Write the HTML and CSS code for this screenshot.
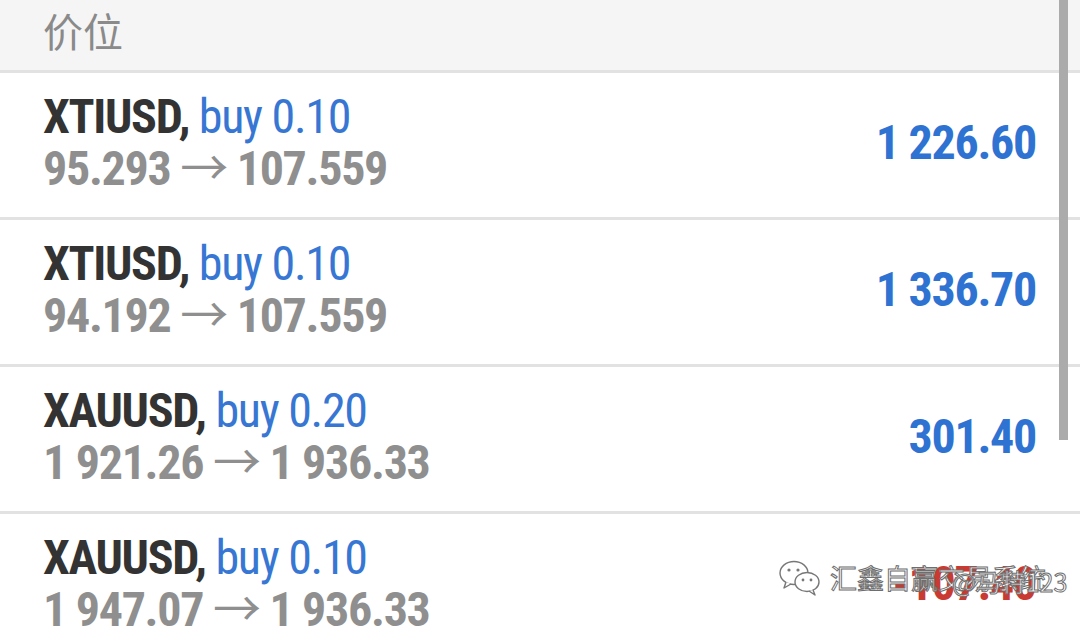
FILE: index.html
```html
<!DOCTYPE html>
<html lang="zh">
<head>
  <meta charset="UTF-8">
  <meta name="viewport" content="width=device-width, initial-scale=1.0">
  <title>持仓</title>
  <link rel="stylesheet" href="styles.css">
</head>
<body>
  <div class="screen">
    <div class="header">价位</div>

    <div class="trade">
      <div class="info">
        <div class="title"><span class="symbol">XTIUSD,</span> <span class="side">buy 0.10</span></div>
        <div class="prices">95.293 <span class="arrow">→</span> 107.559</div>
      </div>
      <div class="profit">1 226.60</div>
    </div>

    <div class="trade">
      <div class="info">
        <div class="title"><span class="symbol">XTIUSD,</span> <span class="side">buy 0.10</span></div>
        <div class="prices">94.192 <span class="arrow">→</span> 107.559</div>
      </div>
      <div class="profit">1 336.70</div>
    </div>

    <div class="trade">
      <div class="info">
        <div class="title"><span class="symbol">XAUUSD,</span> <span class="side">buy 0.20</span></div>
        <div class="prices">1 921.26 <span class="arrow">→</span> 1 936.33</div>
      </div>
      <div class="profit">301.40</div>
    </div>

    <div class="trade">
      <div class="info">
        <div class="title"><span class="symbol">XAUUSD,</span> <span class="side">buy 0.10</span></div>
        <div class="prices">1 947.07 <span class="arrow">→</span> 1 936.33</div>
      </div>
      <div class="profit loss">-107.40</div>
    </div>

    <div class="scrollbar"></div>

    <div class="watermark">
      <svg class="wechat" width="44" height="38" viewBox="0 0 44 38">
        <ellipse cx="16" cy="14" rx="14" ry="11.5" fill="#fff" stroke="#777" stroke-width="1.4"/>
        <path d="M8 23 L6 29 L13 25" fill="#fff" stroke="#777" stroke-width="1.4" stroke-linejoin="round"/>
        <circle cx="11" cy="11" r="1.6" fill="#777"/>
        <circle cx="20" cy="11" r="1.6" fill="#777"/>
        <ellipse cx="29" cy="23" rx="12" ry="9.5" fill="#fff" stroke="#777" stroke-width="1.4"/>
        <path d="M35 31 L37 36 L31 32" fill="#fff" stroke="#777" stroke-width="1.4" stroke-linejoin="round"/>
        <circle cx="25" cy="21" r="1.4" fill="#777"/>
        <circle cx="33" cy="21" r="1.4" fill="#777"/>
      </svg>
      <span class="wm-text">汇鑫自赢交易系统</span>
      <span class="wm-text wm-second">@马特123</span>
    </div>
  </div>
</body>
</html>
```

FILE: styles.css
```css
body {
  margin: 0;
  background-color: #ffffff;
  font-family: "Roboto Condensed", Roboto, "Noto Sans CJK SC", sans-serif;
  font-stretch: 75%;
}
.screen {
  position: relative;
  width: 1080px;
  height: 628px;
  overflow: hidden;
}
.header {
  height: 73px;
  box-sizing: border-box;
  padding: 8px 43px 0;
  background-color: #f5f5f5;
  color: #8a8a8a;
  font-family: "Noto Sans CJK SC", sans-serif;
  font-size: 40px;
  line-height: 44px;
  border-bottom: 3px solid #e2e2e2;
}
.trade {
  display: flex;
  align-items: center;
  justify-content: space-between;
  height: 147px;
  box-sizing: border-box;
  padding: 0 44px 4px 43px;
  border-bottom: 3px solid #e2e2e2;
  font-size: 48px;
  line-height: 52px;
  letter-spacing: -1.3px;
}
.trade:last-of-type {
  border-bottom: none;
}
.title {
  white-space: nowrap;
}
.symbol {
  font-weight: 700;
  color: #333333;
}
.side {
  color: #3777d3;
}
.prices {
  font-weight: 700;
  color: #8f8f8f;
  white-space: nowrap;
}
.arrow {
  font-weight: 400;
}
.profit {
  font-weight: 700;
  color: #2f73d2;
}
.profit.loss {
  color: #c93a32;
}
.scrollbar {
  position: absolute;
  top: 0;
  left: 1059px;
  width: 9px;
  height: 440px;
  background-color: #ababab;
}
.watermark {
  position: absolute;
  left: 778px;
  top: 558px;
  display: flex;
  align-items: center;
  gap: 8px;
}
.wm-text {
  font-family: "Noto Sans CJK SC", sans-serif;
  font-stretch: 100%;
  font-size: 27px;
  letter-spacing: 0;
  color: #ffffff;
  -webkit-text-stroke: 1px #6e6e6e;
  white-space: nowrap;
}
.wm-second {
  position: absolute;
  left: 174px;
  top: 5px;
  font-size: 25px;
}
```
